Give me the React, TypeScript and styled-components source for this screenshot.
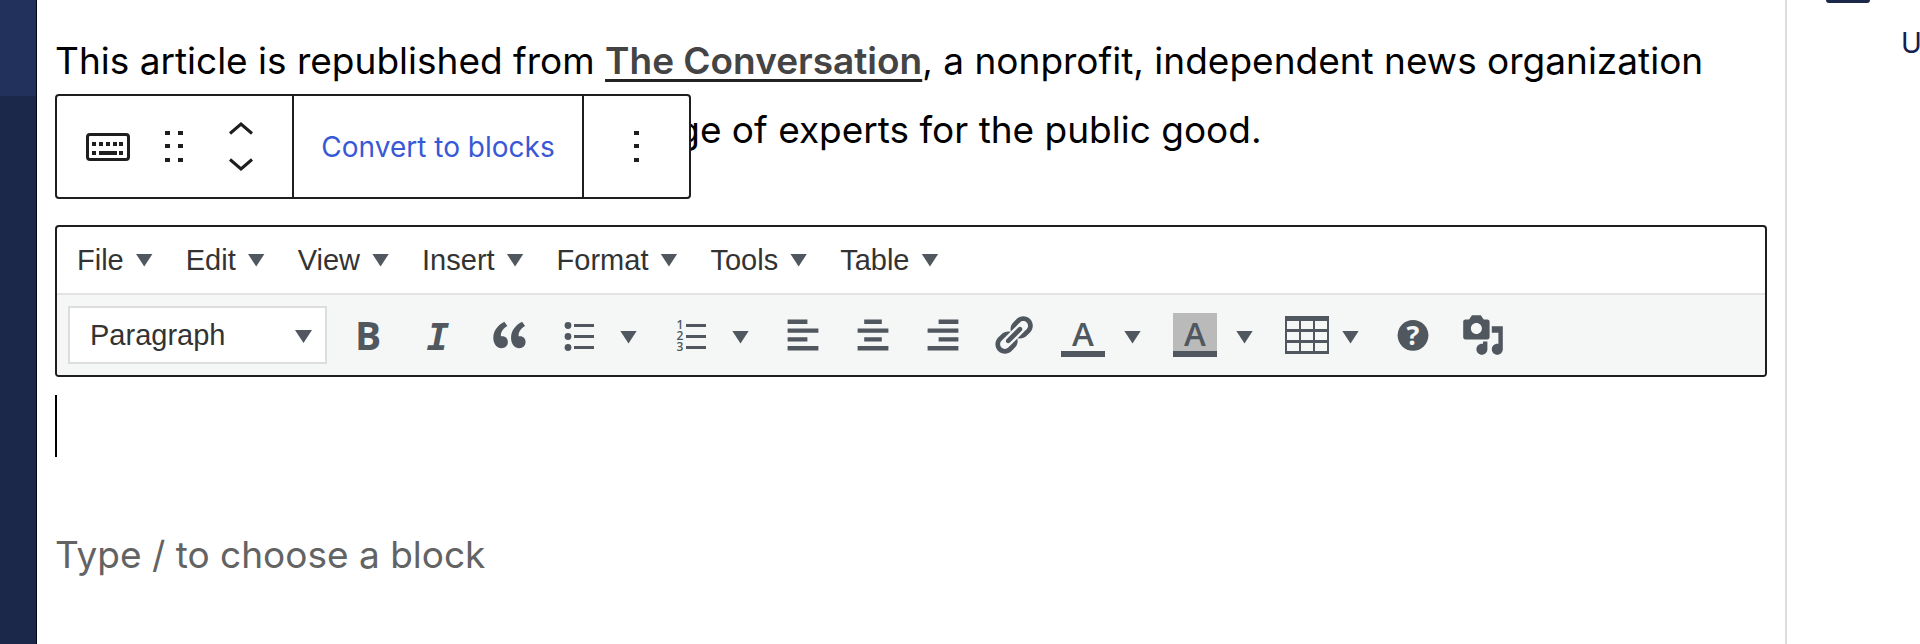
import React from "react";
import styled, { createGlobalStyle } from "styled-components";

const ui = `"Inter", "Liberation Sans", sans-serif`;
const classic = `"Liberation Sans", Arial, sans-serif`;
const ink = "#50575e";

const GlobalStyle = createGlobalStyle`
  *, *::before, *::after { box-sizing: border-box; }
  body { margin: 0; background: #fff; font-family: ${ui}; color: #000; }
  button, input, select { font: inherit; color: inherit; margin: 0; }
`;

const Page = styled.div`
  display: flex;
  min-height: 100vh;
  overflow: hidden;
`;

const AdminMenu = styled.nav`
  flex: 0 0 37px;
  background: #1b284a;
  border-right: 1px solid #050a18;
`;

const CurrentItem = styled.div`
  height: 96px;
  background: #21315c;
`;

const Canvas = styled.main`
  flex: 1;
  min-width: 0;
  padding: 26px 18px 0;
`;

const Paragraph = styled.p`
  margin: 0 0 61px;
  font-size: 37px;
  line-height: 69px;
`;

const StoryLink = styled.a`
  color: #444;
  font-weight: 600;
  text-decoration: underline;
  text-decoration-color: #222;
  text-decoration-thickness: 3px;
  text-underline-offset: 5px;
`;

const ClassicBlock = styled.section`
  position: relative;
`;

const BlockToolbar = styled.div`
  position: absolute;
  left: 0;
  bottom: calc(100% + 26px);
  display: flex;
  height: 105px;
  background: #fff;
  border: 2px solid #1e1e1e;
  border-radius: 4px;
`;

const ToolbarGroup = styled.div`
  display: flex;
  & + & { border-left: 2px solid #1e1e1e; }
`;

const BlockButton = styled.button<{ $width: number }>`
  display: flex;
  align-items: center;
  justify-content: center;
  width: ${(p) => p.$width}px;
  padding: 0;
  border: 0;
  background: none;
  color: #1e1e1e;
`;

const ConvertButton = styled(BlockButton)`
  color: #3858d6;
  font-size: 28px;
  white-space: nowrap;
`;

const Mover = styled.div`
  display: flex;
  flex-direction: column;
  justify-content: center;
`;

const MoverButton = styled(BlockButton)`
  height: 36px;
`;

const Editor = styled.div`
  border: 2px solid #1e1e1e;
  border-radius: 4px;
  overflow: hidden;
  font-family: ${classic};
  font-size: 29px;
  color: #333;
`;

const MenuBar = styled.div`
  display: flex;
  height: 68px;
  padding-left: 3px;
  border-bottom: 2px solid #e2e4e4;
`;

const MenuButton = styled.button`
  display: flex;
  align-items: center;
  gap: 12px;
  padding: 0 16px 0 17px;
  border: 0;
  background: none;
`;

const Tools = styled.div`
  display: flex;
  align-items: center;
  height: 80px;
  padding-left: 11px;
  background: #f5f7f7;
`;

const Triangle = styled.span`
  width: 17px;
  height: 13px;
  background: ${ink};
  clip-path: polygon(0 0, 100% 0, 50% 100%);
`;

const FormatField = styled.label`
  position: relative;
  display: block;
  width: 259px;
  margin-right: 7px;
`;

const FormatSelect = styled.select`
  appearance: none;
  display: block;
  width: 100%;
  height: 58px;
  padding: 0 20px;
  border: 2px solid #ddd;
  border-radius: 0;
  background: #fff;
`;

const FormatArrow = styled(Triangle)`
  position: absolute;
  right: 15px;
  top: 24px;
  pointer-events: none;
`;

const ToolButton = styled.button`
  display: flex;
  padding: 0 13px;
  border: 0;
  background: none;
  color: ${ink};
`;

const SplitTool = styled.div`
  display: flex;
`;

const ArrowButton = styled.button<{ $tight?: boolean }>`
  display: flex;
  align-items: center;
  padding: 4px 19px 0 ${(p) => (p.$tight ? 0 : 6)}px;
  border: 0;
  background: none;
`;

const ClassicContent = styled.div`
  height: 62px;
  margin: 18px 0 63px;
  border-left: 2px solid #000;
`;

const NewBlock = styled.input`
  display: block;
  width: 100%;
  height: 69px;
  padding: 0;
  border: 0;
  outline: 0;
  background: none;
  font-size: 37px;
  &::placeholder { color: #636363; opacity: 1; }
`;

const Settings = styled.aside`
  flex: 0 0 135px;
  border-left: 2px solid #ddd;
  overflow: hidden;
  color: #14204f;
  font-size: 28px;
  line-height: 34px;
  white-space: nowrap;
`;

const Thumb = styled.div`
  width: 44px;
  height: 3px;
  margin-left: 39px;
  background: #1b284a;
  border-radius: 0 0 4px 4px;
`;

const SettingLabel = styled.div`
  margin: 23px 0 0 114px;
`;

const IconSvg = styled.svg`
  display: block;
  overflow: visible;
`;

const Svg = ({ box = 44, children }: { box?: number; children: React.ReactNode }) => (
  <IconSvg width="44" height="44" viewBox={`0 0 ${box} ${box}`} fill="currentColor" aria-hidden="true">
    {children}
  </IconSvg>
);

const sans = `"Open Sans", "Noto Sans", sans-serif`;

const BoldIcon = () => (
  <Svg>
    <text x="21" y="37" textAnchor="middle" fontFamily={sans} fontWeight="700" fontSize="39">B</text>
  </Svg>
);

const ItalicIcon = () => (
  <Svg>
    <text x="21" y="37" textAnchor="middle" fontFamily={`"DejaVu Sans Mono", monospace`} fontWeight="700" fontStyle="italic" fontSize="38">I</text>
  </Svg>
);

const QuoteIcon = () => (
  <Svg box={20}>
    <path d="M9.49 13.22c0-.74-.2-1.38-.61-1.9-.62-.78-1.83-.88-2.53-.72-.29-1.65 1.11-3.75 2.92-4.65L7.88 4c-2.73 1.3-5.42 4.28-4.96 8.05C3.21 14.43 4.59 16 6.54 16c.85 0 1.56-.25 2.12-.75s.83-1.18.83-2.03zm8.05 0c0-.74-.2-1.38-.61-1.9-.63-.78-1.83-.88-2.53-.72-.29-1.65 1.11-3.75 2.92-4.65L15.93 4c-2.73 1.3-5.41 4.28-4.95 8.05.29 2.38 1.66 3.95 3.61 3.95.85 0 1.56-.25 2.12-.75s.83-1.18.83-2.03z" />
  </Svg>
);

const BulletsIcon = () => (
  <Svg>
    {[12, 23, 34].map((y) => (
      <g key={y}>
        <circle cx="11" cy={y + 0.5} r="3.4" />
        <rect x="17" y={y - 1} width="20" height="3" />
      </g>
    ))}
  </Svg>
);

const NumbersIcon = () => (
  <Svg>
    {[12, 23, 34].map((y, i) => (
      <g key={y}>
        <text x="11" y={y + 4} textAnchor="middle" fontFamily={sans} fontWeight="600" fontSize="12">{i + 1}</text>
        <rect x="17" y={y - 1} width="20" height="3" />
      </g>
    ))}
  </Svg>
);

const LeftIcon = () => (
  <Svg box={20}><path d="M3 3h9v2H3zM3 7h14v2H3zM3 11h9v2H3zM3 15h14v2H3z" /></Svg>
);

const CenterIcon = () => (
  <Svg box={20}><path d="M6 3h8v2H6zM3 7h14v2H3zM6 11h8v2H6zM3 15h14v2H3z" /></Svg>
);

const RightIcon = () => (
  <Svg box={20}><path d="M8 3h9v2H8zM3 7h14v2H3zM8 11h9v2H8zM3 15h14v2H3z" /></Svg>
);

const LinkIcon = () => (
  <Svg box={20}>
    <path d="M17.74 2.76c1.68 1.69 1.68 4.41 0 6.1l-1.53 1.52c-1.12 1.12-2.7 1.47-4.14 1.09l2.62-2.61.76-.77.76-.76c.84-.84.84-2.2 0-3.04-.84-.85-2.2-.85-3.04 0l-.77.76-3.38 3.38c-.37-1.44-.02-3.02 1.1-4.14l1.52-1.53c1.69-1.68 4.42-1.68 6.1 0zM8.59 13.43l5.34-5.34c.42-.42.42-1.1 0-1.52-.44-.43-1.13-.39-1.53 0l-5.33 5.34c-.42.42-.42 1.1 0 1.52.44.43 1.13.39 1.52 0zm-.76 2.29l4.14-4.15c.38 1.44.03 3.02-1.09 4.14l-1.52 1.53c-1.69 1.68-4.41 1.68-6.1 0-1.68-1.68-1.68-4.42 0-6.1l1.53-1.52c1.12-1.12 2.7-1.47 4.14-1.1l-4.14 4.15c-.85.84-.85 2.2 0 3.05.84.84 2.2.84 3.04 0z" />
  </Svg>
);

const ColorIcon = ({ filled = false }: { filled?: boolean }) => (
  <Svg>
    {filled && <rect width="44" height="38" fill="#bababa" />}
    <text x="22" y="33" textAnchor="middle" fontFamily={sans} fontWeight="600" fontSize="33">A</text>
    <rect y="38" width="44" height="6" />
  </Svg>
);

const TableIcon = () => (
  <Svg>
    <path fillRule="evenodd" d="M0 3h44v38H0zM2 8h12v8H2zM16 8h12v8H16zM30 8h12v8H30zM2 19h12v8H2zM16 19h12v8H16zM30 19h12v8H30zM2 30h12v8H2zM16 30h12v8H16zM30 30h12v8H30z" />
  </Svg>
);

const HelpIcon = () => (
  <Svg>
    <circle cx="22" cy="22.3" r="15.4" />
    <text x="22" y="32" textAnchor="middle" fontFamily={sans} fontWeight="700" fontSize="27" fill="#f5f7f7">?</text>
  </Svg>
);

const MediaIcon = () => (
  <Svg box={20}>
    <path d="M13 11V4c0-.55-.45-1-1-1h-1.67L9 1H5L3.67 3H2c-.55 0-1 .45-1 1v7c0 .55.45 1 1 1h10c.55 0 1-.45 1-1zM7 4.5c1.38 0 2.5 1.12 2.5 2.5S8.38 9.5 7 9.5 4.5 8.38 4.5 7 5.62 4.5 7 4.5zM14 6h5v10.5c0 1.38-1.12 2.5-2.5 2.5S14 17.88 14 16.5s1.12-2.5 2.5-2.5c.17 0 .34.02.5.05V9h-3V6zm-4 8.05V13h2v3.5c0 1.38-1.12 2.5-2.5 2.5S7 17.88 7 16.5 8.12 14 9.5 14c.17 0 .34.02.5.05z" />
  </Svg>
);

const KeyboardIcon = () => (
  <svg width="44" height="28" viewBox="0 0 44 28" fill="currentColor" aria-hidden="true">
    <rect x="1.5" y="1.5" width="41" height="25" rx="2.5" fill="none" stroke="currentColor" strokeWidth="3" />
    {[6, 13, 20, 27, 33].map((x) => <rect key={x} x={x} y="9" width="4" height="4" />)}
    <path d="M6 18h4v4H6zM13 18h18v4H13zM33 18h4v4H33z" />
  </svg>
);

const Dots = ({ columns }: { columns: number[] }) => (
  <svg width="18" height="32" viewBox="0 0 18 32" fill="currentColor" aria-hidden="true">
    {columns.map((x) => [0, 13, 27].map((y) => <rect key={`${x}-${y}`} x={x} y={y} width="5" height="4" />))}
  </svg>
);

const Chevron = ({ down = false }: { down?: boolean }) => (
  <svg width="24" height="13" viewBox="0 0 24 13" fill="none" stroke="currentColor" strokeWidth="3" aria-hidden="true">
    <path d={down ? "M1 1.5L12 11L23 1.5" : "M1 11.5L12 2L23 11.5"} />
  </svg>
);

const Tool = ({ label, children }: { label: string; children: React.ReactNode }) => (
  <ToolButton type="button" aria-label={label}>{children}</ToolButton>
);

const Split = ({ label, tight, children }: { label: string; tight?: boolean; children: React.ReactNode }) => (
  <SplitTool>
    <Tool label={label}>{children}</Tool>
    <ArrowButton type="button" aria-label={`${label} options`} $tight={tight}><Triangle /></ArrowButton>
  </SplitTool>
);

const menus = ["File", "Edit", "View", "Insert", "Format", "Tools", "Table"];

export default function App() {
  return (
    <>
      <GlobalStyle />
      <Page>
        <AdminMenu aria-label="Admin"><CurrentItem /></AdminMenu>
        <Canvas>
          <Paragraph>
            This article is republished from <StoryLink href="#conversation">The Conversation</StoryLink>, a
            nonprofit, independent news organization dedicated to unlocking the knowledge of experts for the
            public good.
          </Paragraph>
          <ClassicBlock>
            <BlockToolbar role="toolbar" aria-label="Block tools">
              <ToolbarGroup>
                <BlockButton type="button" aria-label="Classic" $width={102}><KeyboardIcon /></BlockButton>
                <BlockButton type="button" aria-label="Drag" $width={30}><Dots columns={[0, 13]} /></BlockButton>
                <Mover>
                  <MoverButton type="button" aria-label="Move up" $width={103}><Chevron /></MoverButton>
                  <MoverButton type="button" aria-label="Move down" $width={103}><Chevron down /></MoverButton>
                </Mover>
              </ToolbarGroup>
              <ToolbarGroup>
                <ConvertButton type="button" $width={288}>Convert to blocks</ConvertButton>
              </ToolbarGroup>
              <ToolbarGroup>
                <BlockButton type="button" aria-label="Options" $width={105}><Dots columns={[6]} /></BlockButton>
              </ToolbarGroup>
            </BlockToolbar>
            <Editor>
              <MenuBar>
                {menus.map((name) => (
                  <MenuButton type="button" key={name}>{name}<Triangle /></MenuButton>
                ))}
              </MenuBar>
              <Tools>
                <FormatField>
                  <FormatSelect aria-label="Text format" defaultValue="Paragraph">
                    <option>Paragraph</option>
                  </FormatSelect>
                  <FormatArrow />
                </FormatField>
                <Tool label="Bold"><BoldIcon /></Tool>
                <Tool label="Italic"><ItalicIcon /></Tool>
                <Tool label="Blockquote"><QuoteIcon /></Tool>
                <Split label="Bulleted list"><BulletsIcon /></Split>
                <Split label="Numbered list"><NumbersIcon /></Split>
                <Tool label="Align left"><LeftIcon /></Tool>
                <Tool label="Align center"><CenterIcon /></Tool>
                <Tool label="Align right"><RightIcon /></Tool>
                <Tool label="Insert link"><LinkIcon /></Tool>
                <Split label="Text color"><ColorIcon /></Split>
                <Split label="Background color"><ColorIcon filled /></Split>
                <Split label="Table" tight><TableIcon /></Split>
                <Tool label="Help"><HelpIcon /></Tool>
                <Tool label="Add media"><MediaIcon /></Tool>
              </Tools>
            </Editor>
            <ClassicContent />
          </ClassicBlock>
          <NewBlock type="text" aria-label="New block" placeholder="Type / to choose a block" />
        </Canvas>
        <Settings>
          <Thumb />
          <SettingLabel>U</SettingLabel>
        </Settings>
      </Page>
    </>
  );
}
